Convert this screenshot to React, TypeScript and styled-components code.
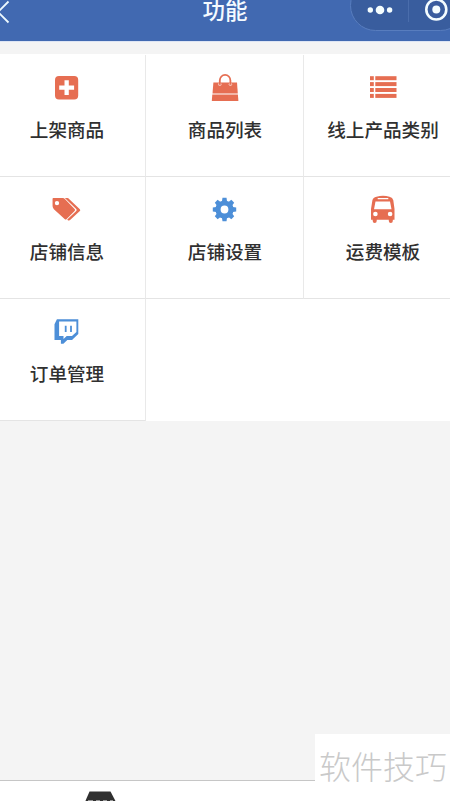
import React from 'react';
import styled, { createGlobalStyle } from 'styled-components';

const GlobalStyle = createGlobalStyle`
  * { box-sizing: border-box; }
  body {
    margin: 0;
    background: #f4f4f4;
    font-family: 'Noto Sans CJK SC', 'Noto Sans', sans-serif;
  }
`;

const orange = '#e66e52';
const blue = '#4d8fd8';

const Screen = styled.div`
  position: relative;
  display: flex;
  flex-direction: column;
  width: 450px;
  height: 801px;
  overflow: hidden;
  background: #f4f4f4;
`;

const Header = styled.header`
  display: grid;
  grid-template-columns: 100px 250px 100px;
  flex: none;
  height: 42px;
  background: #4169b1;
  border-bottom: 1px solid #dde5f4;
`;

const BackIcon = styled.svg`
  width: 12px;
  height: 28px;
`;

const Title = styled.h1`
  margin: 0;
  color: #f4faff;
  font-size: 22.5px;
  font-weight: 500;
  line-height: 18px;
  text-align: center;
`;

const Capsule = styled.div`
  display: flex;
  width: 116px;
  height: 51px;
  margin-top: -20px;
  padding-top: 20px;
  border: 1px solid #587dbe;
  border-radius: 26px;
  background: #395d9e;
`;

const CapsuleIcons = styled.svg`
  flex: none;
  width: 115px;
  height: 30px;
  margin-top: -1px;
`;

const FeatureGrid = styled.main`
  display: grid;
  grid-template-columns: repeat(3, 158px);
  grid-auto-rows: 122px;
  flex: none;
  width: 474px;
  margin: 12px 0 0 -12px;
  padding-top: 1px;
  background: #fff;
`;

const Cell = styled.section`
  display: flex;
  flex-direction: column;
  align-items: center;
  padding-top: 18px;
  border-right: 1px solid #e9e9e9;
  border-bottom: 1px solid #e4e4e4;
`;

const Icon = styled.svg<{ $color: string }>`
  flex: none;
  width: 30px;
  height: 30px;
  color: ${(p) => p.$color};
  fill: currentColor;
`;

const Label = styled.span`
  margin-top: 12px;
  padding-left: 1px;
  color: #303030;
  font-size: 18.6px;
  font-weight: 500;
  line-height: 27px;
  white-space: nowrap;
`;

const TabBar = styled.footer`
  flex: none;
  height: 21px;
  margin-top: auto;
  padding: 10px 0 0 83px;
  border-top: 1px solid #c6c6c6;
  background: #fff;
`;

const ShopIcon = styled.svg`
  display: block;
  width: 34px;
  height: 11px;
`;

const Watermark = styled.div`
  position: absolute;
  right: 0;
  bottom: 0;
  width: 135px;
  height: 67px;
  padding-left: 4px;
  background: #fff;
  color: #c9c9c9;
  font-size: 32px;
  font-weight: 300;
  line-height: 63px;
  white-space: nowrap;
`;

const PlusArt = () => (
  <path
    fillRule="evenodd"
    d="M7 3h15.200a4 4 0 0 1 4 4v15.400a4 4 0 0 1-4 4H7a4 4 0 0 1-4-4V7a4 4 0 0 1 4-4Zm5.500 4.300v5.300H7.200v4.200h5.300v5.300h4.300v-5.300h5.300v-4.200h-5.300V7.300Z"
  />
);

const BagArt = () => (
  <>
    <path d="M3.400 9.500H27l.8 11H2.500Z" />
    <path d="M2.300 21.600h25.600l.5 6.500H1.800Z" />
    <circle cx="9.800" cy="11.300" r="1.700" fill="#f6c5ba" />
    <circle cx="20.400" cy="11.300" r="1.700" fill="#f6c5ba" />
    <path d="M9.800 11.800V7.600a5.300 5.800 0 0 1 10.600 0v4.200" fill="none" stroke="currentColor" strokeWidth="1.800" />
  </>
);

const ListArt = () => (
  <>
    {[3.2, 9.1, 15, 20.900].map((y) => (
      <React.Fragment key={y}>
        <rect x="2" y={y} width="3.800" height="4" />
        <rect x="7.300" y={y} width="21.200" height="4" />
      </React.Fragment>
    ))}
  </>
);

const TagsArt = () => (
  <g transform="translate(-1.200 0) scale(1.030 1.040)">
    <path
      fillRule="evenodd"
      d="M2.400 3h9.200q1.300 0 2.300 1l9.200 9.400q1 1 0 2l-7.700 7.700q-1 1-2 0L3 13.600q-1.300-1.400-1.300-3V3.900Q1.700 3 2.400 3Zm3.600 2.700a2.100 2.100 0 1 0 0 4.200 2.100 2.100 0 0 0 0-4.200Z"
    />
    <path d="M13.600 3H16q1 0 2 1l10.200 9.600q.9 1 0 1.900L19 23.900q-1.300 1.400-2.700.1l-.3-.4 8.700-8.200q.9-1 0-1.900Z" />
  </g>
);

const GearArt = () => (
  <>
    <path
      fillRule="evenodd"
      d="M14.500 5.400a9.100 9.100 0 1 0 0 18.200 9.100 9.100 0 0 0 0-18.200Zm0 5.200a3.900 3.900 0 1 1 0 7.800 3.900 3.900 0 0 1 0-7.800Z"
    />
    {[0, 45, 90, 135, 180, 225, 270, 315].map((a) => (
      <path key={a} transform={`rotate(${a} 14.500 14.500)`} d="M11.700 8l.8-5.200h4l.8 5.200Z" />
    ))}
  </>
);

const BusArt = () => (
  <path
    fillRule="evenodd"
    d="M8.500 1.700Q15-.1 21.500 1.700q3.200.8 3.800 3.600L26.500 14v10.700h-1.700v1.200a2 2 0 0 1-4 0v-1.200H8.700v1.200a2 2 0 0 1-4 0v-1.200H3V14L4.400 5.300q.7-2.900 4.100-3.600Zm1.200 1.300v1.300h10.600V3ZM7.500 6.400l-1.500 7.900h17.500L22 6.400Zm-.1 10.300a2.300 2.300 0 1 0 0 4.600 2.300 2.300 0 0 0 0-4.600Zm14.700 0a2.300 2.300 0 1 0 0 4.600 2.300 2.300 0 0 0 0-4.600Z"
  />
);

const TwitchArt = () => (
  <path
    transform="translate(-.5 -1)"
    fillRule="evenodd"
    d="M5.400 3.200h21.400v14.700l-6.300 6h-4.700l-3.900 3.800H9.400v-3.800H3V8.300Zm2.200 2.200v14.500h4.400v3.200l3.200-3.200h5.300l4.400-3.800V5.400Zm5.700 4.300h1.800v6.200h-1.800Zm5.300 0h1.800v6.200h-1.800Z"
  />
);

const features: { label: string; color: string; Art: React.FC }[] = [
  { label: '上架商品', color: orange, Art: PlusArt },
  { label: '商品列表', color: orange, Art: BagArt },
  { label: '线上产品类别', color: orange, Art: ListArt },
  { label: '店铺信息', color: orange, Art: TagsArt },
  { label: '店铺设置', color: blue, Art: GearArt },
  { label: '运费模板', color: orange, Art: BusArt },
  { label: '订单管理', color: blue, Art: TwitchArt },
];

export default function App() {
  return (
    <Screen>
      <GlobalStyle />
      <Header>
        <BackIcon viewBox="0 0 12 28">
          <path d="M8.500 1.500-2 12 8.500 22.500" fill="none" stroke="#eefaff" strokeWidth="1.800" />
        </BackIcon>
        <Title>功能</Title>
        <Capsule>
          <CapsuleIcons viewBox="0 0 115 30">
            <g fill="#f4fdff">
              <circle cx="19.300" cy="10" r="2.700" />
              <circle cx="29" cy="10" r="4.300" />
              <circle cx="38.600" cy="10" r="2.700" />
              <circle cx="85.300" cy="9.500" r="4" />
            </g>
            <path d="M57.500 0v22" stroke="#4a6dac" />
            <circle cx="85.300" cy="9.500" r="10" fill="none" stroke="#f4fdff" strokeWidth="2.600" />
          </CapsuleIcons>
        </Capsule>
      </Header>
      <FeatureGrid>
        {features.map(({ label, color, Art }) => (
          <Cell key={label}>
            <Icon $color={color} viewBox="0 0 30 30">
              <Art />
            </Icon>
            <Label>{label}</Label>
          </Cell>
        ))}
      </FeatureGrid>
      <TabBar>
        <ShopIcon viewBox="0 0 34 11">
          <path d="M6.500.500h21L33 11H2Z" fill="#303030" />
          <path d="M5 9.800h5m3 0h4m3 0h4m3 0h3" stroke="#999" strokeWidth="1.500" />
        </ShopIcon>
      </TabBar>
      <Watermark>软件技巧</Watermark>
    </Screen>
  );
}
